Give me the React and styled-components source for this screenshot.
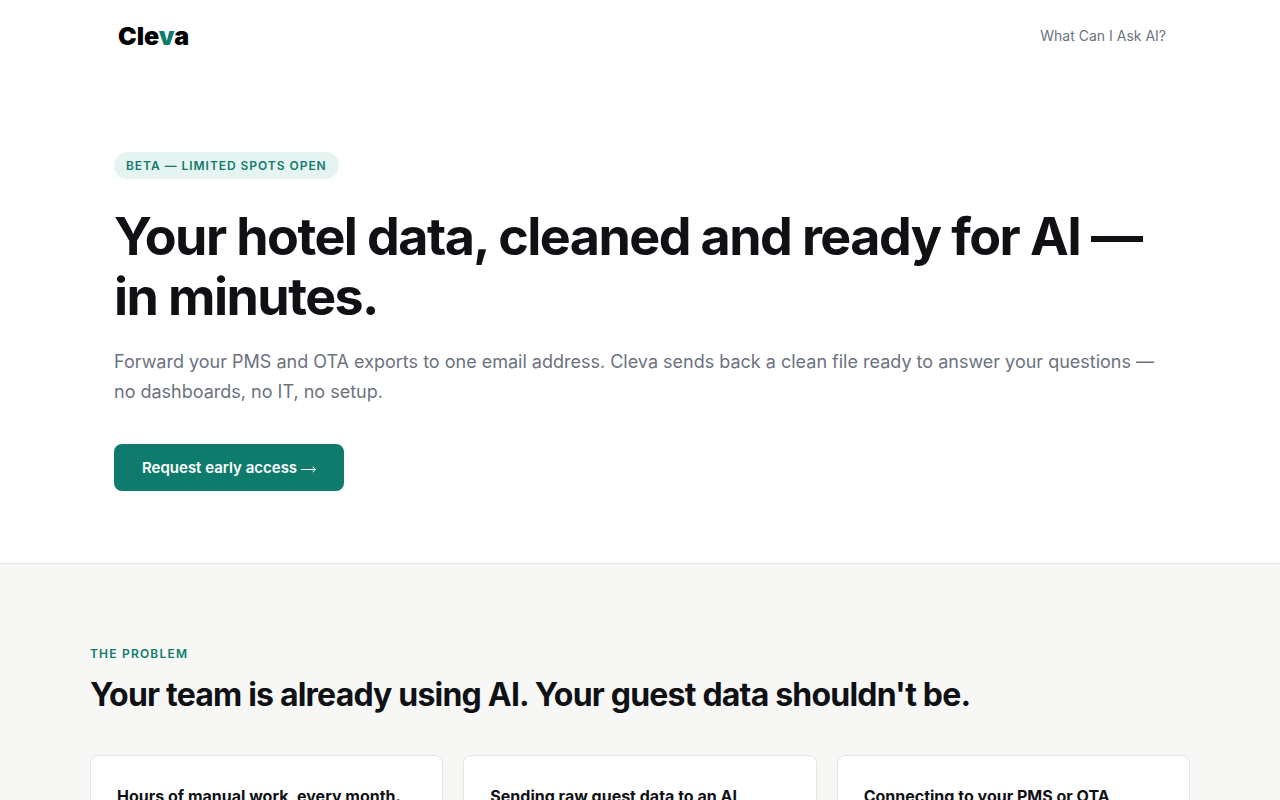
import React from "react";
import styled, { createGlobalStyle } from "styled-components";

const GlobalStyle = createGlobalStyle`
  * {
    box-sizing: border-box;
  }

  body {
    margin: 0;
    background-color: #ffffff;
    color: #0f1115;
    font-family: Inter, "Liberation Sans", sans-serif;
    font-size: 16px;
    line-height: 24px;
  }

  h1, h2, h3, p {
    margin: 0;
  }
`;

const Container = styled.div`
  max-width: 1100px;
  margin: 0 auto;
  padding-inline: ${({ $gutter }) => ($gutter ? "24px" : "0")};
`;

const Nav = styled(Container).attrs({ as: "nav", $gutter: true })`
  display: flex;
  align-items: center;
  justify-content: space-between;
  height: 72px;
`;

const Logo = styled.a`
  padding-inline: 4px;
  color: #000000;
  font-size: 25px;
  font-weight: 900;
  line-height: 32px;
  text-decoration: none;

  span {
    color: #0f7b6c;
  }
`;

const NavLink = styled.a`
  color: #6b7280;
  font-size: 14px;
  text-decoration: none;
`;

const Hero = styled.header`
  padding-block: 80px 72px;
  border-bottom: 1px solid #e5e5e2;
`;

const Badge = styled.span`
  display: inline-block;
  margin-block-end: 28px;
  padding: 4px 12px;
  border-radius: 20px;
  background-color: #e6f4f1;
  color: #0f7b6c;
  font-size: 12px;
  font-weight: 600;
  letter-spacing: 0.08em;
  line-height: 19px;
  text-transform: uppercase;
  vertical-align: top;
`;

const Title = styled.h1`
  font-size: 52px;
  font-weight: 700;
  letter-spacing: -0.03em;
  line-height: 60px;
`;

const Lead = styled.p`
  margin-block: 20px 37px;
  color: #6b7280;
  font-size: 18px;
  line-height: 30px;
`;

const Button = styled.a`
  display: inline-flex;
  align-items: center;
  gap: 4px;
  padding: 12px 28px;
  border-radius: 8px;
  background-color: #0f7b6c;
  color: #ffffff;
  font-size: 15px;
  font-weight: 600;
  line-height: 23px;
  text-decoration: none;
  vertical-align: top;
`;

const Problem = styled.section`
  padding-block: 80px;
  background-color: #f7f7f5;
`;

const Label = styled.p`
  margin-block-end: 12px;
  color: #0f7b6c;
  font-size: 12px;
  font-weight: 600;
  letter-spacing: 0.1em;
  line-height: 20px;
  text-transform: uppercase;
`;

const Subtitle = styled.h2`
  margin-block-end: 42px;
  font-size: 32px;
  font-weight: 700;
  letter-spacing: -0.025em;
  line-height: 37px;
`;

const Cards = styled.div`
  display: grid;
  grid-template-columns: repeat(3, 1fr);
  gap: 20px;
`;

const Card = styled.article`
  padding: 28px 26px;
  border: 1px solid #e5e5e2;
  border-radius: 8px;
  background-color: #ffffff;
`;

const CardTitle = styled.h3`
  font-size: 16px;
  font-weight: 700;
  line-height: 24px;
`;

const problems = [
  "Hours of manual work, every month.",
  "Sending raw guest data to an AI",
  "Connecting to your PMS or OTA",
];

function Arrow() {
  return (
    <svg width="15" height="16" viewBox="0 0 15 16" fill="none" aria-hidden="true">
      <path d="M0 9.5H14.3M11.5 6.7L14.3 9.5L11.5 12.3" stroke="currentColor" />
    </svg>
  );
}

function App() {
  return (
    <>
      <GlobalStyle />
      <Nav>
        <Logo href="#">
          Cle<span>v</span>a
        </Logo>
        <NavLink href="#ask">What Can I Ask AI?</NavLink>
      </Nav>
      <Hero>
        <Container $gutter>
          <Badge>Beta — Limited spots open</Badge>
          <Title>Your hotel data, cleaned and ready for AI — in minutes.</Title>
          <Lead>
            Forward your PMS and OTA exports to one email address. Cleva sends
            back a clean file ready to answer your questions — no dashboards, no
            IT, no setup.
          </Lead>
          <Button href="#access">
            Request early access
            <Arrow />
          </Button>
        </Container>
      </Hero>
      <Problem>
        <Container>
          <Label>The problem</Label>
          <Subtitle>
            Your team is already using AI. Your guest data shouldn't be.
          </Subtitle>
          <Cards>
            {problems.map((title) => (
              <Card key={title}>
                <CardTitle>{title}</CardTitle>
              </Card>
            ))}
          </Cards>
        </Container>
      </Problem>
    </>
  );
}

export default App;
